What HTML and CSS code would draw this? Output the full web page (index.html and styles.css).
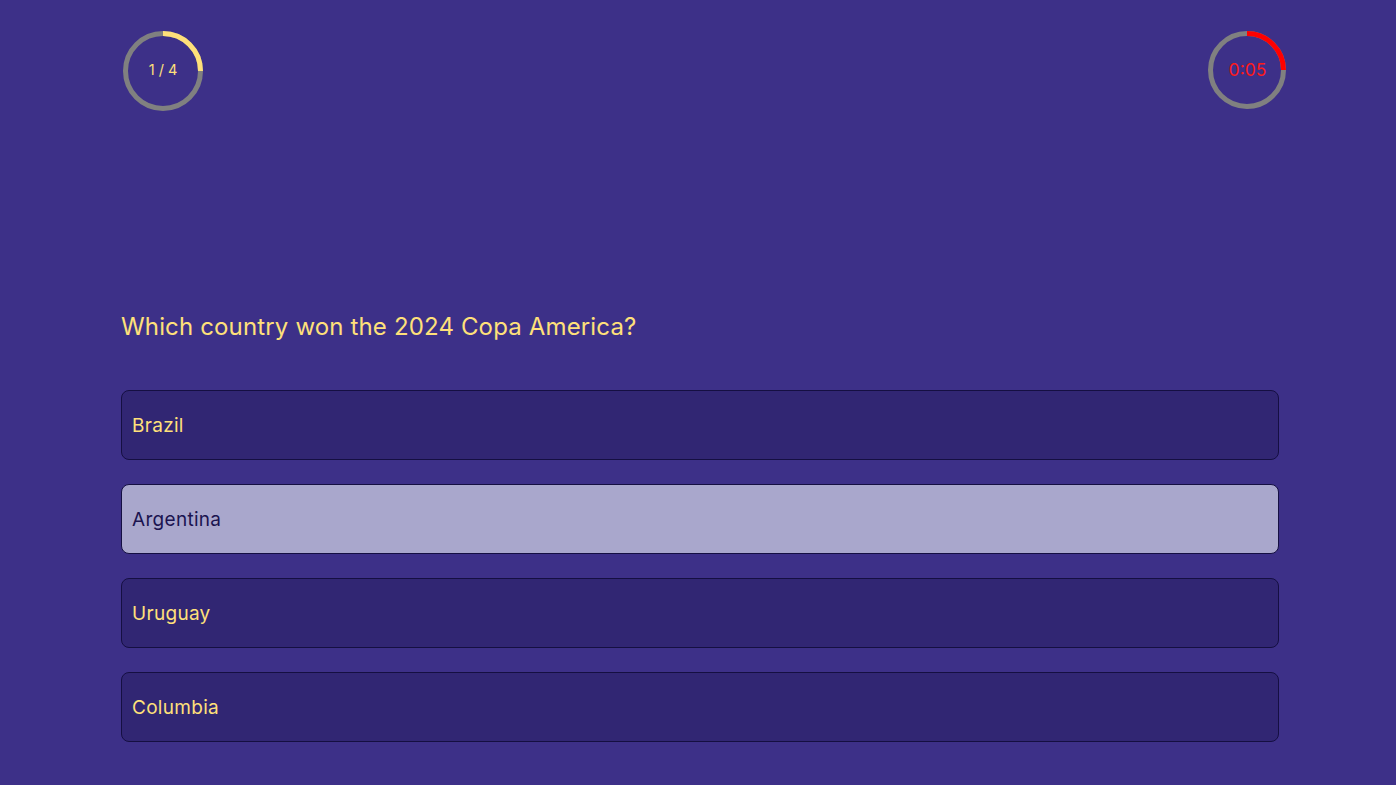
FILE: index.html
```html
<!DOCTYPE html>
<html>
<head>
<meta charset="utf-8">
<link rel="stylesheet" href="styles.css">
</head>
<body>
<div class="page">
  <header class="top">
    <div class="ring ring-progress">
      <svg width="82" height="82" viewBox="0 0 82 82">
        <circle cx="41" cy="41" r="37.5" fill="none" stroke="#808080" stroke-width="5"/>
        <path d="M41 3.5 A37.5 37.5 0 0 1 78.5 41" fill="none" stroke="#ffe07a" stroke-width="5"/>
      </svg>
      <span class="ring-label progress-label">1 / 4</span>
    </div>
    <div class="ring ring-timer">
      <svg width="80" height="80" viewBox="0 0 80 80">
        <circle cx="40" cy="40" r="36.5" fill="none" stroke="#808080" stroke-width="5"/>
        <path d="M40 3.5 A36.5 36.5 0 0 1 76.5 40" fill="none" stroke="#ff0000" stroke-width="5"/>
      </svg>
      <span class="ring-label timer-label">0:05</span>
    </div>
  </header>
  <main class="quiz">
    <h1 class="question">Which country won the 2024 Copa America?</h1>
    <div class="options">
      <button class="option">Brazil</button>
      <button class="option selected">Argentina</button>
      <button class="option">Uruguay</button>
      <button class="option">Columbia</button>
    </div>
  </main>
</div>
</body>
</html>
```

FILE: styles.css
```css
* { box-sizing: border-box; }
html, body {
  margin: 0;
  padding: 0;
  background: #3d3088;
  height: 100%;
}
body {
  font-family: "Inter", "Open Sans", sans-serif;
  color: #ffe07a;
}
.page {
  padding: 30px 109px 0 122px;
  display: flex;
  flex-direction: column;
}
.top {
  display: flex;
  justify-content: space-between;
  align-items: flex-start;
}
.ring {
  position: relative;
  display: flex;
  align-items: center;
  justify-content: center;
}
.ring svg { display: block; }
.ring-label {
  position: absolute;
  inset: 0;
  display: flex;
  align-items: center;
  justify-content: center;
}
.progress-label {
  font-size: 14.5px;
  color: #ffe07a;
  padding-bottom: 3px;
}
.timer-label {
  font-size: 17.5px;
  color: #ff1a1a;
  padding-bottom: 1px;
  padding-left: 1px;
}
.quiz {
  width: 1158px;
  margin-left: -1px;
  margin-top: 198px;
}
.question {
  margin: 0;
  font-weight: 400;
  font-size: 24px;
  letter-spacing: 0.15px;
  line-height: 34px;
  color: #ffe07a;
}
.options {
  margin-top: 46px;
  display: flex;
  flex-direction: column;
  gap: 24px;
}
.option {
  height: 70px;
  width: 100%;
  text-align: left;
  padding: 0 10px;
  border: 1px solid #150f42;
  border-radius: 8px;
  background: #312673;
  color: #ffe07a;
  font-family: inherit;
  font-size: 19px;
  letter-spacing: 0.3px;
}
.option.selected {
  background: #a9a7cc;
  color: #1b1450;
}
```
